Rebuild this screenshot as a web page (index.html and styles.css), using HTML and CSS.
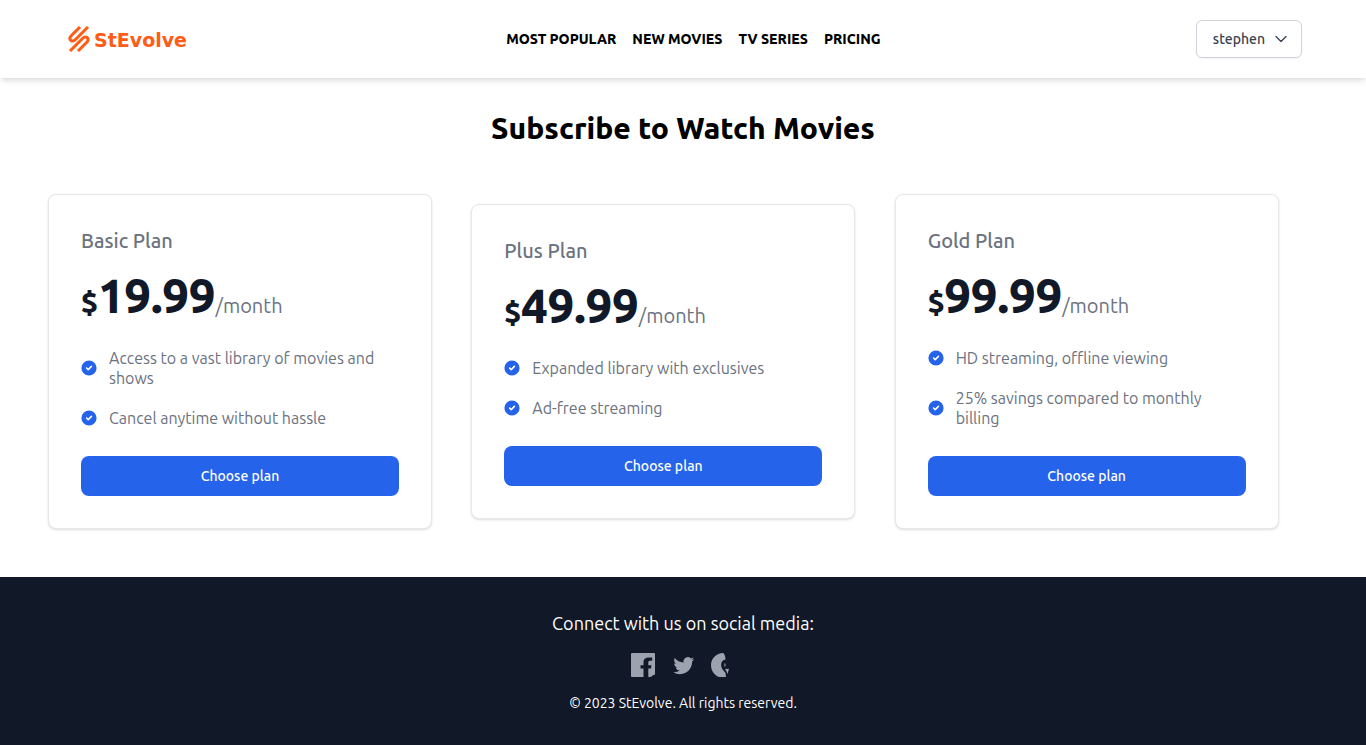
FILE: index.html
```html
<!DOCTYPE html>
<html lang="en">
<head>
<meta charset="utf-8">
<meta name="viewport" content="width=device-width, initial-scale=1">
<title>StEvolve</title>
<link rel="stylesheet" href="styles.css">
</head>
<body>
<svg class="sprite" aria-hidden="true">
  <symbol id="check" viewBox="0 0 20 20"><path d="M10 .5a9.500 9.500 0 1 0 9.500 9.500A9.510 9.510 0 0 0 10 .5Zm3.707 8.207-4 4a1 1 0 0 1-1.414 0l-2-2a1 1 0 0 1 1.414-1.414L9 10.586l3.293-3.293a1 1 0 0 1 1.414 1.414Z"/></symbol>
</svg>
<header class="header">
  <a class="logo" href="#">
    <svg class="logo-mark" viewBox="0 0 22 26" aria-hidden="true"><path d="M12 1L3 10Q.8 12.700 3 14.500Q5 16 7.500 13.500L20 1M10 25L19 16Q21.200 13.300 19 11.500Q17 10 14.500 12.500L2 25"/></svg>
    <span class="logo-text">StEvolve</span>
  </a>
  <nav class="nav">
    <a href="#">MOST POPULAR</a>
    <a href="#">NEW MOVIES</a>
    <a href="#">TV SERIES</a>
    <a href="#">PRICING</a>
  </nav>
  <button class="user" type="button">stephen
    <svg class="chevron" viewBox="0 0 24 24" aria-hidden="true"><path d="M19.500 8.250l-7.500 7.500-7.500-7.500"/></svg>
  </button>
</header>
<main class="main">
  <h1 class="title">Subscribe to Watch Movies</h1>
  <div class="plans">
    <section class="card">
      <h2 class="plan">Basic Plan</h2>
      <p class="price"><span class="currency">$</span><span class="amount">19.99</span><span class="period">/month</span></p>
      <ul class="features">
        <li><svg class="check"><use href="#check"/></svg><span>Access to a vast library of movies and shows</span></li>
        <li><svg class="check"><use href="#check"/></svg><span>Cancel anytime without hassle</span></li>
      </ul>
      <button class="choose" type="button">Choose plan</button>
    </section>
    <section class="card">
      <h2 class="plan">Plus Plan</h2>
      <p class="price"><span class="currency">$</span><span class="amount">49.99</span><span class="period">/month</span></p>
      <ul class="features">
        <li><svg class="check"><use href="#check"/></svg><span>Expanded library with exclusives</span></li>
        <li><svg class="check"><use href="#check"/></svg><span>Ad-free streaming</span></li>
      </ul>
      <button class="choose" type="button">Choose plan</button>
    </section>
    <section class="card">
      <h2 class="plan">Gold Plan</h2>
      <p class="price"><span class="currency">$</span><span class="amount">99.99</span><span class="period">/month</span></p>
      <ul class="features">
        <li><svg class="check"><use href="#check"/></svg><span>HD streaming, offline viewing</span></li>
        <li><svg class="check"><use href="#check"/></svg><span>25% savings compared to monthly billing</span></li>
      </ul>
      <button class="choose" type="button">Choose plan</button>
    </section>
  </div>
</main>
<footer class="footer">
  <p class="connect">Connect with us on social media:</p>
  <div class="social">
    <a href="#" aria-label="Facebook"><svg viewBox="0 0 24 24"><path d="M1 0H23Q24 0 24 1V21Q24 22 23 22H22Q21 24 19 24H17.300V15.500H20L20.500 12.200H17.300V9.800C17.300 8.500 17.700 7.800 19 7.800H21.200V4.500H18C14.200 4.500 12.500 6 12.500 9V12.200H9.500V15.500H12.500V24H1Q0 24 0 23V1Q0 0 1 0Z"/></svg></a>
    <a href="#" aria-label="Twitter"><svg viewBox="-2 -2.600 26.200 27.600" preserveAspectRatio="xMidYMid meet"><path d="M23.953 4.570a10 10 0 01-2.825.775 4.958 4.958 0 002.163-2.723c-.951.555-2.005.959-3.127 1.184a4.920 4.920 0 00-8.384 4.482C7.690 8.095 4.067 6.130 1.640 3.162a4.822 4.822 0 00-.666 2.475c0 1.710.87 3.213 2.188 4.096a4.904 4.904 0 01-2.228-.616v.06a4.923 4.923 0 003.946 4.827 4.996 4.996 0 01-2.212.085 4.936 4.936 0 004.604 3.417 9.867 9.867 0 01-6.102 2.105c-.39 0-.779-.023-1.170-.067a13.995 13.995 0 007.557 2.209c9.053 0 13.998-7.496 13.998-13.985 0-.21 0-.42-.015-.63A9.935 9.935 0 0024 4.590z"/></svg></a>
    <a href="#" aria-label="GitHub"><svg viewBox="0 0 24 24"><path d="M12.500 0C5 .3 0 5.500 0 12C0 17.500 3 22 8 24H15L14.500 20L12 17C10 14.500 9.500 11 11 8.500Q12 7 14.500 6.500Q14.500 2.500 12.500 0ZM14 9.500Q12.500 12 14 14.500Q15.200 12 14 9.500ZM14 16L18 15.800L16.500 21L15.500 18.500Z"/></svg></a>
  </div>
  <p class="copyright">© 2023 StEvolve. All rights reserved.</p>
</footer>
</body>
</html>
```
FILE: styles.css
```css
* { box-sizing: border-box; margin: 0; padding: 0; }
body { min-height: 100vh; display: flex; flex-direction: column; font-family: Ubuntu, "Noto Sans", sans-serif; background: #fff; color: #000; }
a { color: inherit; text-decoration: none; }
button { font: inherit; cursor: pointer; }
.sprite { display: none; }
.header { display: flex; justify-content: space-between; align-items: center; padding: 20px 64px; box-shadow: 0 4px 6px -1px rgb(0 0 0 / 0.1), 0 2px 4px -2px rgb(0 0 0 / 0.1); }
.logo { display: flex; align-items: center; gap: 4px; padding: 0 4px; font: bold 19px/24px "DejaVu Sans", sans-serif; color: #ff5c16; }
.logo-mark { width: 22px; height: 26px; fill: none; stroke: currentColor; stroke-width: 3; }
.logo-text { padding-top: 2px; }
.nav { display: flex; gap: 16px; font-size: 14px; line-height: 20px; font-weight: 800; }
.user { display: flex; align-items: center; gap: 8px; padding: 8px 12px 8px 16px; border: 1px solid #d1d5db; border-radius: 6px; background: #fff; color: #374151; font-size: 14px; line-height: 20px; font-weight: 500; box-shadow: 0 1px 2px rgb(0 0 0 / 0.05); }
.chevron { width: 16px; height: 16px; fill: none; stroke: currentColor; stroke-width: 2; stroke-linecap: round; stroke-linejoin: round; }
.main { flex: 1; padding: 32px 48px 48px; }
.title { margin-bottom: 48px; font-size: 30px; line-height: 36px; font-weight: 800; text-align: center; }
.plans { display: grid; grid-template-columns: repeat(3, 1fr); align-items: center; }
.card { width: 100%; max-width: 384px; padding: 32px; border: 1px solid #e5e7eb; border-radius: 8px; background: #fff; box-shadow: 0 1px 3px rgb(0 0 0 / 0.1), 0 1px 2px -1px rgb(0 0 0 / 0.1); }
.plan { margin-bottom: 16px; font-size: 20px; line-height: 28px; font-weight: 500; color: #6b7280; }
.price { display: flex; align-items: baseline; color: #111827; }
.currency { font-size: 30px; line-height: 36px; font-weight: 800; }
.amount { font-size: 47px; line-height: 50px; font-weight: 800; }
.period { font-size: 20px; line-height: 28px; color: #6b7280; }
.features { display: grid; gap: 20px; margin: 27px 0 28px; list-style: none; color: #6b7280; font-size: 16px; line-height: 20px; }
.features li { display: flex; align-items: center; gap: 12px; }
.check { flex: none; width: 16px; height: 16px; fill: #2563eb; }
.choose { width: 100%; padding: 10px 20px; border: 0; border-radius: 8px; background: #2563eb; color: #fff; font-size: 14px; line-height: 20px; font-weight: 500; }
.footer { padding: 32px 16px; background: #111827; color: #fff; text-align: center; }
.connect { font-size: 18px; line-height: 28px; }
.social { display: flex; justify-content: center; gap: 16px; margin: 16px 0; color: #9ca3af; }
.social svg { display: block; width: 24px; height: 24px; fill: currentColor; }
.copyright { font-size: 14px; line-height: 20px; }
```
